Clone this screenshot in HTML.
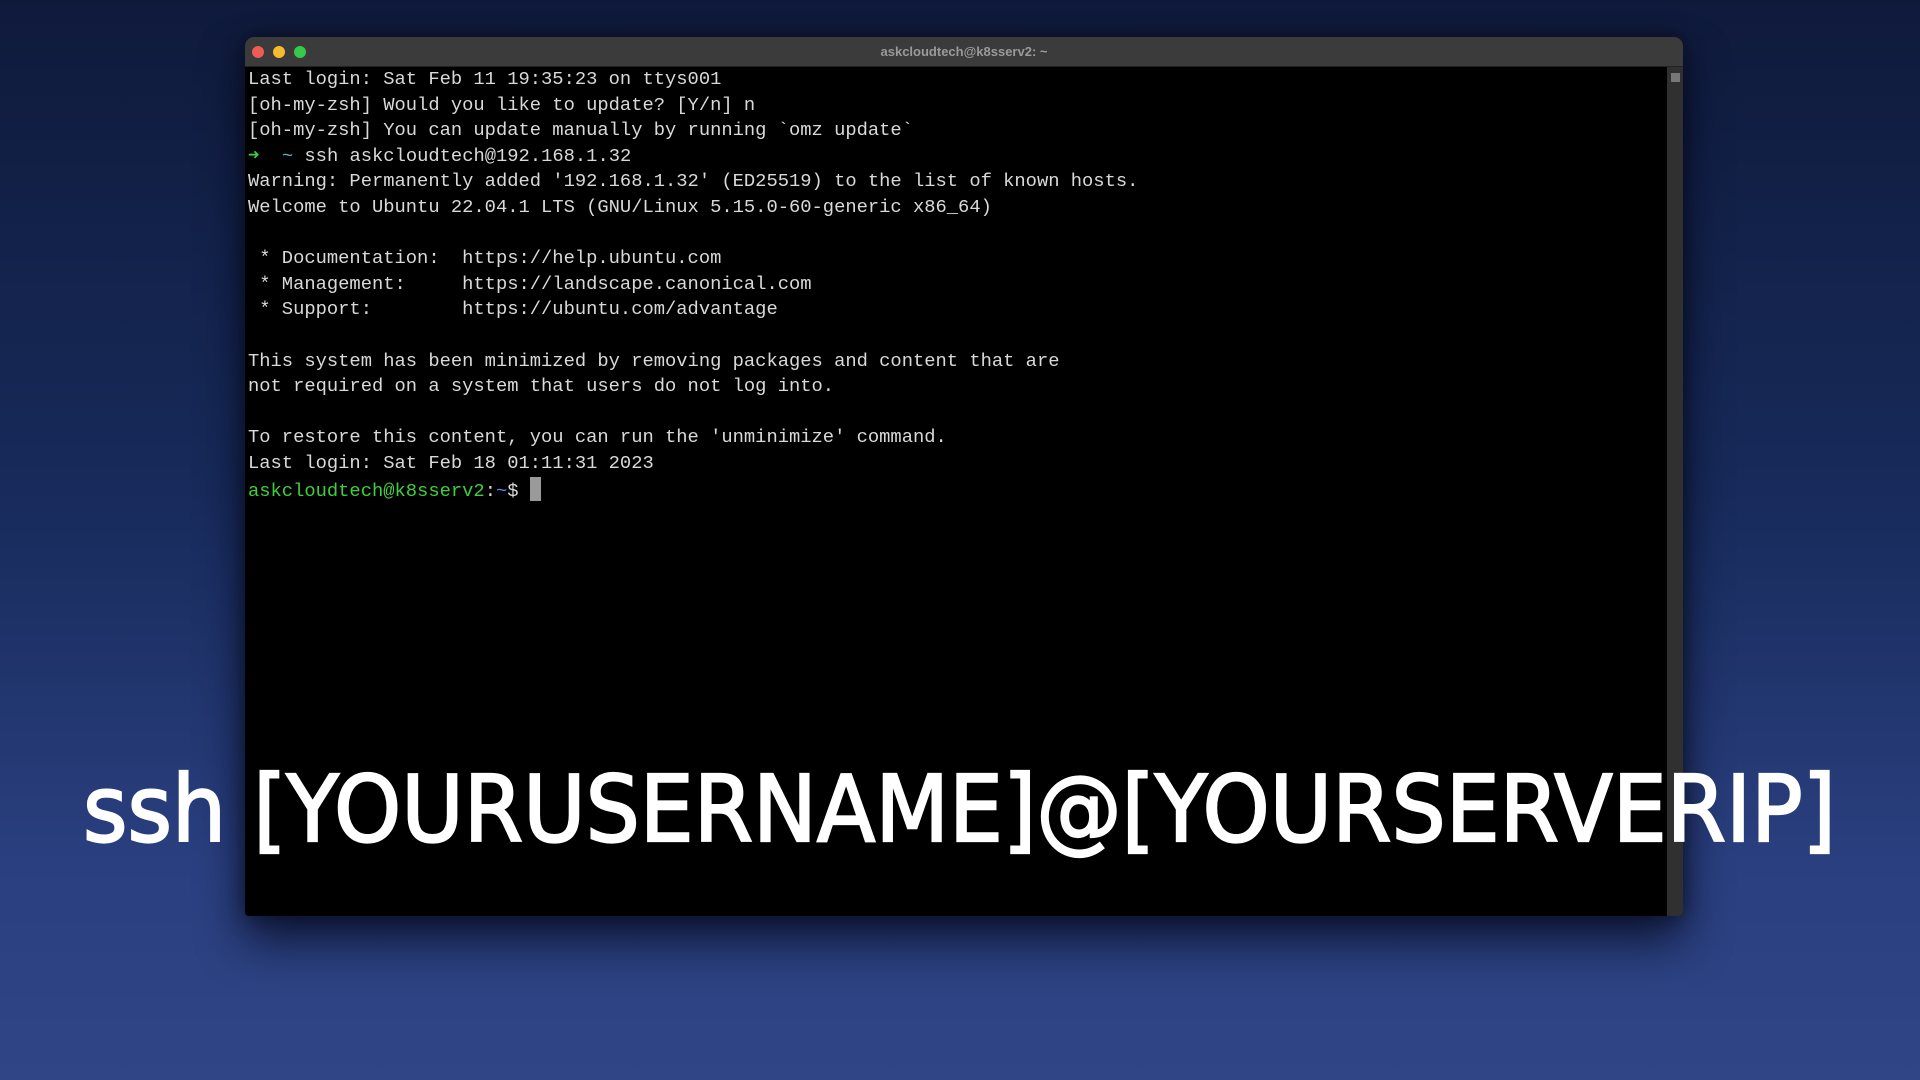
<!DOCTYPE html>
<html><head><meta charset="utf-8"><style>
html,body{margin:0;padding:0}
body{width:1920px;height:1080px;overflow:hidden;position:relative;background:linear-gradient(180deg,#0f1a3b 0%,#172a5a 45%,#2a3f7f 80%,#2f4586 100%);font-family:"Liberation Sans",sans-serif}
.win{position:absolute;left:245px;top:37px;width:1438px;height:879px;background:#000;border-radius:9px 9px 4px 4px;box-shadow:0 25px 45px rgba(5,10,30,.75),0 0 20px rgba(0,0,0,.5);overflow:hidden}
.tb{position:absolute;left:0;top:0;right:0;height:29px;background:#3a3b3a;border-bottom:1px solid #222}
.dot{position:absolute;top:9px;width:12px;height:12px;border-radius:50%}
.title{position:absolute;left:0;right:0;top:7px;text-align:center;color:#9a9a9a;font-size:13px;font-weight:bold}
.sb{position:absolute;right:0;top:30px;width:16px;bottom:0;background:#2f302f}
.sb i{position:absolute;left:4px;top:6px;width:9px;height:9px;background:#777}
pre{position:absolute;left:3px;top:30px;margin:0;font-family:"Liberation Mono",monospace;font-size:18.8px;line-height:25.6px;color:#d9d9d9}
.g{color:#3fcf3a}.b{color:#6a7cff}
.cur{display:inline-block;width:11px;height:24px;background:#9a9a9a;vertical-align:-5px}
svg{position:absolute;left:0;top:0}
</style></head><body>
<div class="win">
<div class="tb">
<div class="dot" style="left:7px;background:#ee5c55"></div>
<div class="dot" style="left:28px;background:#f5bc2f"></div>
<div class="dot" style="left:49px;background:#36c94a"></div>
<div class="title">askcloudtech@k8sserv2: ~</div>
</div>
<div class="sb"><i></i></div>
<pre>Last login: Sat Feb 11 19:35:23 on ttys001
[oh-my-zsh] Would you like to update? [Y/n] n
[oh-my-zsh] You can update manually by running `omz update`
<span class="g">➜</span>  <span style="color:#5fb0c0">~</span> ssh askcloudtech@192.168.1.32
Warning: Permanently added '192.168.1.32' (ED25519) to the list of known hosts.
Welcome to Ubuntu 22.04.1 LTS (GNU/Linux 5.15.0-60-generic x86_64)

 * Documentation:  https://help.ubuntu.com
 * Management:     https://landscape.canonical.com
 * Support:        https://ubuntu.com/advantage

This system has been minimized by removing packages and content that are
not required on a system that users do not log into.

To restore this content, you can run the 'unminimize' command.
Last login: Sat Feb 18 01:11:31 2023
<span class="g">askcloudtech@k8sserv2</span>:<span class="b">~</span>$ <span class="cur"></span></pre>
</div>
<svg width="1920" height="1080"><text x="83" y="841" font-family="DejaVu Sans, sans-serif" font-size="92" fill="#fff" stroke="#fff" stroke-width="2.2" textLength="1753" lengthAdjust="spacingAndGlyphs">ssh [YOURUSERNAME]@[YOURSERVERIP]</text></svg>
</body></html>
